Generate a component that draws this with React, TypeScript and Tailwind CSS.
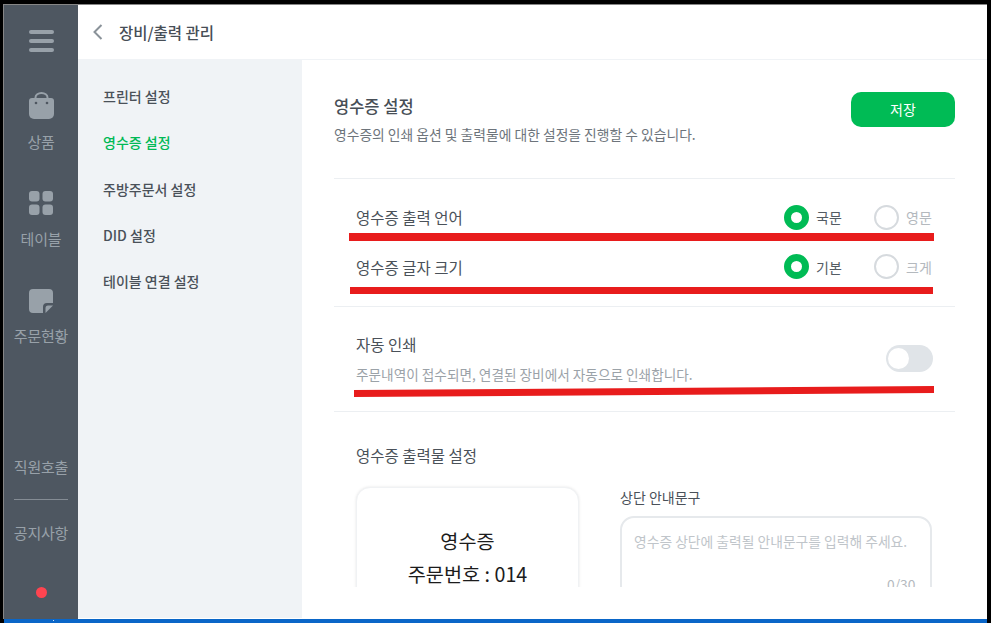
const FONT = "font-['Noto_Sans_CJK_KR','Noto_Sans',sans-serif]";

function SideLabel({ children }: { children: string }) {
  return <span className="text-[15px] leading-[20px] text-[#98a1a9] tracking-[-0.2px]">{children}</span>;
}

function Radio({ label, checked }: { label: string; checked?: boolean }) {
  return (
    <div className="flex items-center gap-[7px]">
      {checked ? (
        <span className="w-[25px] h-[25px] rounded-full border-[7.5px] border-[#00bb55] bg-white" />
      ) : (
        <span className="w-[25px] h-[25px] rounded-full border-2 border-[#d6dade] bg-white" />
      )}
      <span className={checked ? "w-[26px] text-[14px] leading-[20px] text-[#545c64]" : "w-[26px] text-[14px] leading-[20px] text-[#b4b9be]"}>
        {label}
      </span>
    </div>
  );
}

function OptionRow({ label, options, className }: { label: string; options: string[]; className: string }) {
  return (
    <div className={`flex items-center justify-between pl-[22px] pr-[23px] ${className}`}>
      <span className="text-[15.5px] leading-[22px] text-[#4a5159]">{label}</span>
      <div className="flex gap-[32px]">
        <Radio label={options[0]} checked />
        <Radio label={options[1]} />
      </div>
    </div>
  );
}

export default function App() {
  const menu = ["프린터 설정", "영수증 설정", "주방주문서 설정", "DID 설정", "테이블 연결 설정"];

  return (
    <div className={`relative w-[991px] h-[623px] bg-black overflow-hidden flex flex-col pt-[4px] pl-[3px] pr-[4px] ${FONT}`}>
      <div className="flex-1 flex min-h-0 border-t border-l border-[#868686]">
        {/* left rail */}
        <div className="w-[74px] bg-[#4e5761] flex flex-col items-center">
          <div className="flex flex-col gap-[5px] mt-[25px] w-[25px]">
            <span className="h-[4px] rounded-full bg-[#98a1a9]" />
            <span className="h-[4px] rounded-full bg-[#98a1a9]" />
            <span className="h-[4px] rounded-full bg-[#98a1a9]" />
          </div>
          <svg className="mt-[40px]" width="25" height="27" viewBox="0 0 25 27" fill="#98a1a9">
            <path d="M6.500 7V5.500a6 4.500 0 0 1 12 0V7" fill="none" stroke="#98a1a9" strokeWidth="2" />
            <path d="M3 6h19a3 3 0 0 1 3 3v13a5 5 0 0 1-5 5H5a5 5 0 0 1-5-5V9a3 3 0 0 1 3-3z" />
            <circle cx="7" cy="11" r="1.300" fill="#4e5761" />
            <circle cx="18" cy="11" r="1.300" fill="#4e5761" />
          </svg>
          <div className="mt-[10px]"><SideLabel>상품</SideLabel></div>
          <svg className="mt-[38px]" width="24" height="24" viewBox="0 0 24 24" fill="#98a1a9">
            <rect x="0" y="0" width="10.500" height="10.500" rx="3" />
            <rect x="13.500" y="0" width="10.500" height="10.500" rx="3" />
            <rect x="0" y="13.500" width="10.500" height="10.500" rx="3" />
            <rect x="13.500" y="13.500" width="10.500" height="10.500" rx="3" />
          </svg>
          <div className="mt-[11px]"><SideLabel>테이블</SideLabel></div>
          <svg className="mt-[39px]" width="24" height="24" viewBox="0 0 24 24" fill="#98a1a9">
            <path d="M4 0h16a4 4 0 0 1 4 4v10h-6a4 4 0 0 0-4 4v6H4a4 4 0 0 1-4-4V4a4 4 0 0 1 4-4z" />
            <path d="M24 16.500 16.500 24v-5a2.500 2.500 0 0 1 2.500-2.500z" />
          </svg>
          <div className="mt-[10px]"><SideLabel>주문현황</SideLabel></div>
          <div className="mt-[107px]"><SideLabel>직원호출</SideLabel></div>
          <div className="mt-[21px] w-[54px] h-[1px] bg-[#848c94]" />
          <div className="mt-[20px]"><SideLabel>공지사항</SideLabel></div>
          <span className="mt-[43px] w-[11px] h-[11px] rounded-full bg-[#ff4450]" />
        </div>

        <div className="flex-1 flex flex-col min-w-0 bg-white">
          {/* header */}
          <div className="h-[55px] shrink-0 flex items-center pl-[15px] gap-[16px] bg-white border-b border-[#f0f3f6]">
            <svg width="10" height="16" viewBox="0 0 10 16" fill="none" stroke="#8a9299" strokeWidth="2">
              <path d="M8.500 1 1.500 8l7 7" />
            </svg>
            <span className="text-[15.500px] leading-[24px] font-medium text-[#474e56]">장비/출력 관리</span>
          </div>

          <div className="flex-1 flex min-h-0">
            {/* sub menu */}
            <div className="w-[224px] shrink-0 bg-[#f0f3f6] pt-[13.500px] pl-[25px] mb-[1px] flex flex-col">
              {menu.map((item, i) => (
                <div
                  key={item}
                  className={
                    i === 1
                      ? "h-[46.250px] flex items-center text-[14px] font-medium text-[#00b956]"
                      : "h-[46.250px] flex items-center text-[14px] font-medium text-[#4a5159]"
                  }
                >
                  {item}
                </div>
              ))}
            </div>

            {/* settings */}
            <div className="flex-1 min-w-0 bg-white">
              <div className="h-[527px] overflow-hidden pt-[32px] pl-[32px] pr-[32px]">
                <div className="flex items-start justify-between h-[87px] border-b border-[#eceff2]">
                  <div>
                    <div className="text-[16.500px] leading-[28px] font-medium text-[#474e56]">영수증 설정</div>
                    <div className="text-[13.800px] leading-[20px] text-[#6d747b] mt-[4px]">
                      영수증의 인쇄 옵션 및 출력물에 대한 설정을 진행할 수 있습니다.
                    </div>
                  </div>
                  <button className="w-[104px] h-[35px] rounded-[10px] bg-[#00bb55] text-white text-[14px]">저장</button>
                </div>

                <OptionRow label="영수증 출력 언어" options={["국문", "영문"]} className="h-[75px] pt-[1px]" />
                <OptionRow label="영수증 글자 크기" options={["기본", "크게"]} className="h-[25px]" />

                <div className="mt-[27px] border-t border-[#eceff2] border-b h-[106px] flex items-center justify-between pl-[22px] pr-[22px]">
                  <div className="pb-[2px]">
                    <div className="text-[15.500px] leading-[22px] text-[#4a5159]">자동 인쇄</div>
                    <div className="text-[13.650px] leading-[20px] text-[#9ba2a8] mt-[9px]">
                      주문내역이 접수되면, 연결된 장비에서 자동으로 인쇄합니다.
                    </div>
                  </div>
                  <div className="w-[47px] h-[27px] rounded-full bg-[#e0e4e8] flex items-center pl-[2px] mb-[2px]">
                    <span className="w-[21px] h-[21px] rounded-full bg-white" />
                  </div>
                </div>

                <div className="pl-[22px] pr-[23px] pt-[32px]">
                  <div className="text-[15.500px] leading-[22px] text-[#4a5159]">영수증 출력물 설정</div>
                  <div className="flex mt-[21px] gap-[41px]">
                    <div className="w-[223px] h-[200px] shrink-0 rounded-[14px] border border-[#f0f2f4] shadow-[0_0_3px_rgba(0,0,0,0.1)] bg-white pt-[36px] text-center text-[19.700px] leading-[33px] text-[#1c1c1c]">
                      <div>영수증</div>
                      <div>주문번호 : 014</div>
                    </div>
                    <div className="flex-1 min-w-0">
                      <div className="text-[14px] leading-[20px] text-[#4a5159]">상단 안내문구</div>
                      <div className="relative mt-[9px] h-[120px] rounded-[14px] border-2 border-[#e6e9ec] pl-[12px] pt-[12px] text-[13.800px] leading-[22px] text-[#c0c5ca]">
                        영수증 상단에 출력될 안내문구를 입력해 주세요.
                        <span className="absolute left-[265px] top-[55px] text-[#b4b9be]">0/30</span>
                      </div>
                    </div>
                  </div>
                </div>
              </div>
            </div>
          </div>
        </div>
      </div>

      <div className="relative h-[4px] shrink-0 ml-[1px] bg-[#0a66c8]">
        <span className="absolute left-[49px] top-[1px] w-[1px] h-[1px] bg-[#cfe0f2]" />
      </div>

      {/* hand-drawn red marks on top of the shot */}
      <svg className="absolute left-0 top-0 pointer-events-none" width="991" height="623" viewBox="0 0 991 623">
        <polygon points="349,233 934,233 934,241 349,241" fill="#e81c1c" />
        <polygon points="350,287 933,287 933,294 350,294" fill="#e81c1c" />
        <polygon points="354,390 934,386 934,393 354,397" fill="#e81c1c" />
      </svg>
    </div>
  );
}
